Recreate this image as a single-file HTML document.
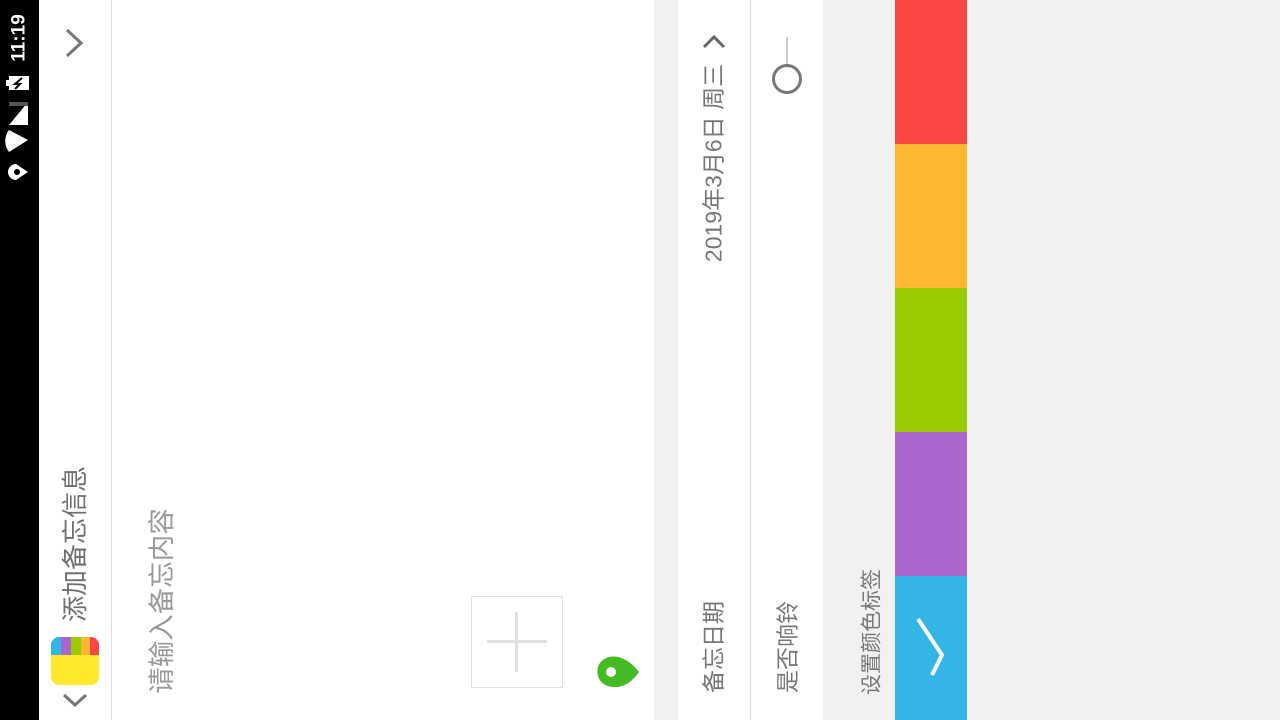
<!DOCTYPE html>
<html><head><meta charset="utf-8"><style>
body{margin:0;width:1280px;height:720px;position:relative;overflow:hidden;background:#f1f1f1;font-family:"Liberation Sans","Noto Sans CJK SC",sans-serif;}
.a{position:absolute}
.t{position:absolute;white-space:nowrap;transform:translate(-50%,-50%) rotate(-90deg);color:#777;line-height:1}
</style></head><body>
<div class="a" style="left:0;top:0;width:39px;height:720px;background:#000"></div>
<div class="t" style="left:19px;top:38px;color:#fff;font-size:19px;font-weight:bold">11:19</div>
<svg class="a" style="left:0;top:70px" width="39" height="115">
<rect x="9" y="6" width="20" height="14" fill="#fff"/><rect x="6" y="10" width="3" height="6" fill="#fff"/><path d="M22 8 L15 14 L20 14 L15 19" stroke="#000" stroke-width="2" fill="none"/>
<path d="M28 32 L28 55 L9 55 Z" fill="#fff"/><rect x="9" y="32" width="19" height="4" fill="#555"/>
<path d="M28 70 L9 60 A18 18 0 0 0 9 82 Z" fill="#fff"/>
<path d="M28 102 L16 94 A8 8 0 1 0 16 110 Z" fill="#fff"/><circle cx="17" cy="102" r="3" fill="#000"/>
</svg>
<div class="a" style="left:39px;top:0;width:72px;height:720px;background:#fff"></div>
<div class="a" style="left:111px;top:0;width:1px;height:720px;background:#ddd"></div>
<div class="a" style="left:112px;top:0;width:542px;height:720px;background:#fff"></div>
<svg class="a" style="left:60px;top:27px" width="32" height="32"><path d="M7 3 L21 16 L7 29" stroke="#777" stroke-width="3" fill="none"/></svg>
<svg class="a" style="left:60px;top:688px" width="30" height="24"><path d="M4 7 L15 17 L26 7" stroke="#777" stroke-width="3" fill="none"/></svg>
<svg class="a" style="left:51px;top:637px" width="48" height="48"><defs><clipPath id="c"><rect width="48" height="48" rx="8"/></clipPath></defs><g clip-path="url(#c)"><rect width="48" height="48" fill="#ffe92e"/><rect x="0" width="10" height="18" fill="#33b5e5"/><rect x="10" width="10" height="18" fill="#aa66cc"/><rect x="20" width="10" height="18" fill="#99cc00"/><rect x="30" width="9" height="18" fill="#ffb732"/><rect x="39" width="9" height="18" fill="#ff4646"/></g></svg>
<div class="t" style="left:75px;top:544px;font-size:26px;color:#707070">添加备忘信息</div>
<div class="t" style="left:162px;top:601px;font-size:26.5px;color:#999">请输入备忘内容</div>
<div class="a" style="left:471px;top:596px;width:90px;height:90px;border:1px solid #e3e3e3"></div>
<div class="a" style="left:487px;top:640px;width:60px;height:3px;background:#e0e0e0"></div>
<div class="a" style="left:515px;top:612px;width:3px;height:60px;background:#e0e0e0"></div>
<svg class="a" style="left:596px;top:654px" width="46" height="36"><path d="M43 18 C33 5 22 1 13 3 C3 6 0 14 2 22 C5 32 16 35 26 32 C33 30 38 25 43 18Z" fill="#44bb22"/><circle cx="15" cy="18" r="5" fill="#fff"/></svg>
<div class="a" style="left:678px;top:0;width:72px;height:720px;background:#fff"></div>
<div class="a" style="left:750px;top:0;width:1px;height:720px;background:#ddd"></div>
<div class="a" style="left:751px;top:0;width:72px;height:720px;background:#fff"></div>
<div class="t" style="left:714px;top:163px;font-size:23px">2019年3月6日 周三</div>
<svg class="a" style="left:700px;top:30px" width="28" height="24"><path d="M4 17 L14 7 L24 17" stroke="#666" stroke-width="3" fill="none"/></svg>
<div class="t" style="left:714px;top:647px;font-size:23px">备忘日期</div>
<div class="t" style="left:788px;top:647px;font-size:23px">是否响铃</div>
<div class="a" style="left:786px;top:37px;width:2px;height:28px;background:#ccc"></div>
<svg class="a" style="left:770px;top:62px" width="34" height="34"><circle cx="17" cy="17" r="13.5" stroke="#777" stroke-width="3" fill="#fff"/></svg>
<div class="t" style="left:872px;top:632px;font-size:21px">设置颜色标签</div>
<div class="a" style="left:895px;top:0;width:72px;height:144px;background:#ff4646"></div>
<div class="a" style="left:895px;top:144px;width:72px;height:144px;background:#ffb732"></div>
<div class="a" style="left:895px;top:288px;width:72px;height:144px;background:#99cc00"></div>
<div class="a" style="left:895px;top:432px;width:72px;height:144px;background:#aa66cc"></div>
<div class="a" style="left:895px;top:576px;width:72px;height:144px;background:#33b5e5"></div>
<svg class="a" style="left:910px;top:615px" width="40" height="64"><path d="M8 4 L32 40 L22 60" stroke="#fff" stroke-width="4" fill="none"/></svg>
</body></html>
